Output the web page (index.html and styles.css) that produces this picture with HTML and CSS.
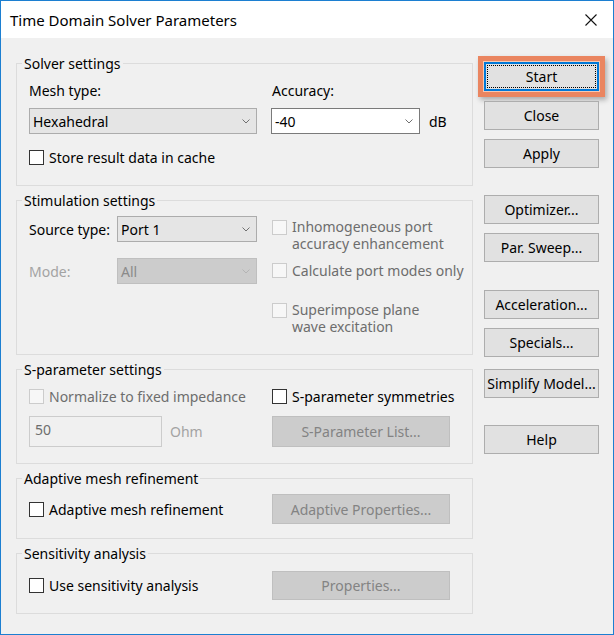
FILE: index.html
```html
<!DOCTYPE html>
<html>
<head>
<meta charset="utf-8">
<title>Time Domain Solver Parameters</title>
<link rel="stylesheet" href="styles.css">
</head>
<body>
<div class="window">
  <div class="titlebar">
    <span class="title">Time Domain Solver Parameters</span>
    <svg class="close-x" width="12" height="12" viewBox="0 0 12 12"><path d="M0.5 0.5 L11.5 11.5 M11.5 0.5 L0.5 11.5" stroke="#111" stroke-width="1.1" fill="none"/></svg>
  </div>
  <div class="content">
    <div class="groups">
      <section class="group g-solver">
        <span class="legend">Solver settings</span>
        <div class="g-grid solver-body">
          <div class="field">
            <div class="label">Mesh type:</div>
            <div class="select w228"><span>Hexahedral</span><svg class="chev" width="8" height="5" viewBox="0 0 8 5"><polyline points="0.5,0.5 4,4 7.5,0.5" fill="none" stroke="#707070"/></svg></div>
          </div>
          <div class="field">
            <div class="label">Accuracy:</div>
            <div class="combo-row">
              <div class="select combo"><span>-40</span><svg class="chev" width="8" height="5" viewBox="0 0 8 5"><polyline points="0.5,0.5 4,4 7.5,0.5" fill="none" stroke="#707070"/></svg></div>
              <span>dB</span>
            </div>
          </div>
          <label class="check span2 cache"><span class="box"></span><span>Store result data in cache</span></label>
        </div>
      </section>

      <section class="group g-stim">
        <span class="legend">Stimulation settings</span>
        <div class="g-grid stim-body">
          <div class="stim-left">
            <div class="row">
              <span class="row-label">Source type:</span>
              <div class="select w140"><span>Port 1</span><svg class="chev" width="8" height="5" viewBox="0 0 8 5"><polyline points="0.5,0.5 4,4 7.5,0.5" fill="none" stroke="#707070"/></svg></div>
            </div>
            <div class="row mode-row">
              <span class="row-label dim">Mode:</span>
              <div class="select w140 disabled"><span>All</span><svg class="chev" width="8" height="5" viewBox="0 0 8 5"><polyline points="0.5,0.5 4,4 7.5,0.5" fill="none" stroke="#b4b4b4"/></svg></div>
            </div>
          </div>
          <div class="stim-right">
            <label class="check multi off"><span class="box"></span><span>Inhomogeneous port<br>accuracy enhancement</span></label>
            <label class="check off item2"><span class="box"></span><span>Calculate port modes only</span></label>
            <label class="check multi off item3"><span class="box"></span><span>Superimpose plane<br>wave excitation</span></label>
          </div>
        </div>
      </section>

      <section class="group g-spar">
        <span class="legend">S-parameter settings</span>
        <div class="g-grid spar-body">
          <label class="check off"><span class="box"></span><span>Normalize to fixed impedance</span></label>
          <label class="check"><span class="box"></span><span>S-parameter symmetries</span></label>
          <div class="imp-row">
            <div class="input disabled">50</div>
            <span class="dim">Ohm</span>
          </div>
          <div><button class="btn off w178 h31">S-Parameter List...</button></div>
        </div>
      </section>

      <section class="group g-adapt">
        <span class="legend">Adaptive mesh refinement</span>
        <div class="g-grid line-body adapt-body">
          <label class="check"><span class="box"></span><span>Adaptive mesh refinement</span></label>
          <div><button class="btn off w178 h30">Adaptive Properties...</button></div>
        </div>
      </section>

      <section class="group g-sens">
        <span class="legend">Sensitivity analysis</span>
        <div class="g-grid line-body sens-body">
          <label class="check"><span class="box"></span><span>Use sensitivity analysis</span></label>
          <div><button class="btn off w178">Properties...</button></div>
        </div>
      </section>
    </div>

    <div class="actions">
      <button class="btn start">Start</button>
      <button class="btn mt10">Close</button>
      <button class="btn mt9">Apply</button>
      <button class="btn mt27">Optimizer...</button>
      <button class="btn mt9">Par. Sweep...</button>
      <button class="btn mt28">Acceleration...</button>
      <button class="btn mt9">Specials...</button>
      <button class="btn mt12">Simplify Model...</button>
      <button class="btn mt27">Help</button>
    </div>
  </div>
</div>
</body>
</html>
```

FILE: styles.css
```css
* { box-sizing: border-box; }
html, body { margin: 0; padding: 0; background: #ffffff; }
body {
  font-family: "Noto Sans", "Open Sans", sans-serif;
  font-size: 14px;
  color: #000;
}
.window {
  width: 614px;
  height: 635px;
  border: 1px solid #1c7fd1;
  background: #f0f0f0;
  display: flex;
  flex-direction: column;
}
.titlebar {
  height: 37px;
  flex: none;
  background: #ffffff;
  display: flex;
  align-items: center;
  justify-content: space-between;
  padding: 0 16px 0 9px;
}
.title { font-size: 15px; }
.content {
  flex: 1;
  display: flex;
  gap: 11px;
  padding: 0 14px 0 15px;
}
.groups {
  width: 457px;
  flex: none;
  display: flex;
  flex-direction: column;
  gap: 14px;
  padding-top: 25px;
}
.group {
  position: relative;
  border: 1px solid #dcdcdc;
}
.g-solver { height: 123px; }
.g-stim { height: 155px; }
.g-spar { height: 95px; }
.g-adapt { height: 61px; }
.g-sens { height: 61px; }
.legend {
  position: absolute;
  top: -10px;
  left: 5px;
  padding: 0 2px;
  line-height: 20px;
  background: #f0f0f0;
  white-space: nowrap;
}
.g-grid {
  display: grid;
  grid-template-columns: 243px 1fr;
  padding-left: 12px;
}
.span2 { grid-column: 1 / 3; }

/* solver */
.solver-body { padding-top: 17px; }
.label { line-height: 20px; margin-bottom: 7px; }
.select {
  height: 26px;
  border: 1px solid #acacac;
  background: #e5e5e5;
  display: flex;
  align-items: center;
  justify-content: space-between;
  padding: 0 6px 0 3px;
}
.w228 { width: 228px; }
.w140 { width: 140px; }
.combo { width: 149px; background: #ffffff; border-color: #7a7a7a; }
.combo-row { display: flex; align-items: center; gap: 9px; margin-left: -1px; }
.select.disabled { background: #cccccc; border-color: #bfbfbf; color: #8a8a8a; }
.chev { flex: none; }
.cache { margin-top: 15px; }

/* checkbox */
.check {
  display: flex;
  align-items: center;
  gap: 5px;
  line-height: 17px;
  white-space: nowrap;
}
.box {
  width: 15px;
  height: 15px;
  flex: none;
  border: 1px solid #333333;
  background: #ffffff;
}
.check.multi { align-items: flex-start; line-height: 17px; }
.check.multi .box { margin-top: 2px; }
.check.off { color: #6d6d6d; }
.check.off .box { border-color: #cccccc; background: #f7f7f7; }

/* stimulation */
.stim-body { padding-top: 15px; }
.row { display: flex; align-items: center; }
.row-label { width: 88px; }
.mode-row { margin-top: 16px; }
.dim { color: #a3a3a3; }
.stim-right { padding-top: 2px; }
.item2 { margin-top: 10px; }
.item3 { margin-top: 22px; }

/* s-parameter */
.spar-body { padding-top: 18px; row-gap: 11px; }
.imp-row { display: flex; align-items: center; gap: 8px; }
.input {
  width: 133px;
  height: 31px;
  border: 1px solid #cccccc;
  background: #f0f0f0;
  padding: 3px 0 0 5px;
  color: #6d6d6d;
  line-height: 20px;
}

/* one-line groups */
.line-body { align-items: center; }
.adapt-body { padding-top: 15px; }
.sens-body { padding-top: 17px; }

/* buttons */
.btn {
  display: block;
  width: 115px;
  height: 29px;
  padding: 0;
  border: 1px solid #adadad;
  background: #e1e1e1;
  font-family: inherit;
  font-size: 14px;
  color: #000;
  text-align: center;
}
.btn.off { background: #cccccc; border-color: #bfbfbf; color: #838383; }
.w178 { width: 178px; }
.h30 { height: 30px; }
.h31 { height: 31px; }
.actions {
  width: 115px;
  flex: none;
  display: flex;
  flex-direction: column;
  padding-top: 24px;
}
.mt9 { margin-top: 9px; }
.mt10 { margin-top: 10px; }
.mt12 { margin-top: 12px; }
.mt27 { margin-top: 27px; }
.mt28 { margin-top: 28px; }
.start {
  border-color: #0078d7;
  outline: 1px dotted #000;
  outline-offset: -4px;
  box-shadow: inset 0 0 0 1px #0078d7,
              0 0 0 1px #f6c8b3,
              0 0 0 6px #ea8560,
              2px 3px 5px 6px rgba(0, 0, 0, 0.28);
}
```
